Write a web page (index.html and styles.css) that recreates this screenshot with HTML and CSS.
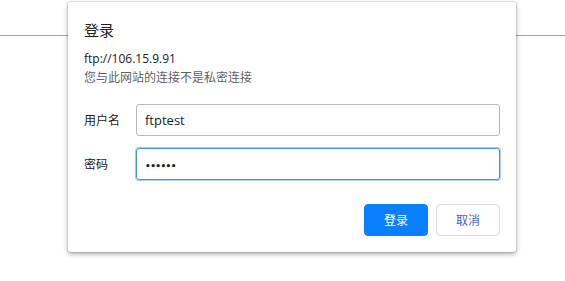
FILE: index.html
```html
<!DOCTYPE html>
<html lang="zh-CN">
<head>
<meta charset="utf-8">
<title>登录</title>
<link rel="stylesheet" href="styles.css">
</head>
<body>
<div class="toolbar-line"></div>
<div class="dialog">
  <div class="title">登录</div>
  <div class="url">ftp://106.15.9.91</div>
  <div class="note">您与此网站的连接不是私密连接</div>
  <div class="form">
    <div class="row">
      <label class="label">用户名</label>
      <div class="input">ftptest</div>
    </div>
    <div class="row">
      <label class="label">密码</label>
      <div class="input focused"><span class="dots">••••••</span></div>
    </div>
  </div>
  <div class="actions">
    <button class="btn primary">登录</button>
    <button class="btn secondary">取消</button>
  </div>
</div>
</body>
</html>
```
FILE: styles.css
```css
html, body {
  margin: 0;
  padding: 0;
  background: #fff;
  font-family: "Segoe UI", "Open Sans", "Noto Sans CJK SC", sans-serif;
  color: #202124;
}
.toolbar-line {
  height: 35px;
  border-bottom: 1px solid #a8a8a8;
}
.dialog {
  position: absolute;
  left: 68px;
  top: 2px;
  width: 416px;
  padding: 16px;
  background: #fff;
  border-radius: 3px;
  box-shadow: 0 0 0 1px rgba(0,0,0,0.08), 0 2px 5px rgba(0,0,0,0.35);
}
.title {
  font-size: 15px;
  line-height: 24px;
  height: 24px;
  color: #202124;
}
.url {
  margin-top: 7px;
  font-size: 12px;
  line-height: 19px;
  color: #202124;
}
.note {
  font-size: 12px;
  line-height: 19px;
  color: #5f6368;
}
.form {
  margin-top: 17px;
  display: flex;
  flex-direction: column;
  gap: 12px;
}
.row {
  display: flex;
  align-items: center;
  height: 32px;
}
.label {
  width: 52px;
  font-size: 12px;
  color: #202124;
}
.input {
  flex: 1;
  box-sizing: border-box;
  height: 32px;
  border: 1px solid #b8b8b8;
  border-radius: 3px;
  padding: 0 8px;
  font-size: 13px;
  line-height: 30px;
  color: #202124;
}
.input.focused {
  border-color: #4a90e2;
  box-shadow: 0 0 0 1px #a9cbf3;
}
.dots {
  font-family: "DejaVu Sans", sans-serif;
  font-size: 9px;
  letter-spacing: -0.6px;
  font-weight: bold;
  color: #202124;
}
.actions {
  margin-top: 24px;
  display: flex;
  justify-content: flex-end;
  gap: 8px;
}
.btn {
  width: 64px;
  height: 32px;
  border-radius: 4px;
  font-family: inherit;
  font-size: 12px;
  padding: 0;
}
.primary {
  background: #0a80ff;
  border: 1px solid #0a80ff;
  color: #fff;
}
.secondary {
  background: #fff;
  border: 1px solid #dadce0;
  color: #4a5fd0;
}
```
